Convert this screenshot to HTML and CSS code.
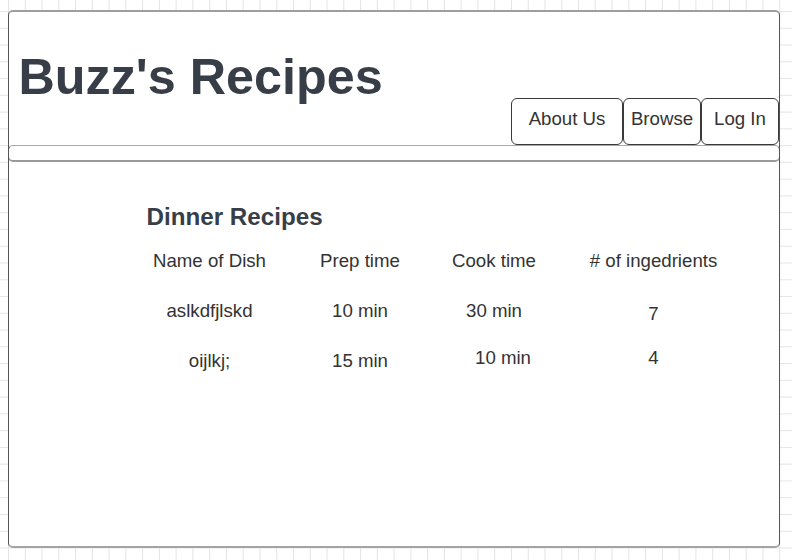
FILE: index.html
```html
<!DOCTYPE html>
<html lang="en">
<head>
<meta charset="utf-8">
<title>Buzz's Recipes</title>
<link rel="stylesheet" href="styles.css">
</head>
<body>
<div class="frame">
  <header class="header">
    <h1 class="title">Buzz's Recipes</h1>
    <nav class="nav">
      <a class="btn btn-wide">About Us</a>
      <a class="btn">Browse</a>
      <a class="btn">Log In</a>
    </nav>
  </header>
  <div class="bar"></div>
  <main class="main">
    <h2 class="heading">Dinner Recipes</h2>
    <div class="table">
      <div class="cell">Name of Dish</div>
      <div class="cell">Prep time</div>
      <div class="cell">Cook time</div>
      <div class="cell"># of ingedrients</div>

      <div class="cell">aslkdfjlskd</div>
      <div class="cell">10 min</div>
      <div class="cell">30 min</div>
      <div class="cell nudge-down">7</div>

      <div class="cell">oijlkj;</div>
      <div class="cell">15 min</div>
      <div class="cell nudge-up nudge-right">10 min</div>
      <div class="cell nudge-up">4</div>
    </div>
  </main>
</div>
</body>
</html>
```

FILE: styles.css
```css
html, body {
  height: 100%;
}
body {
  margin: 0;
  font-family: "Liberation Sans", Arial, sans-serif;
  background-color: #ffffff;
  background-image:
    linear-gradient(to right, #e4e4e4 1px, transparent 1px),
    linear-gradient(to bottom, #e4e4e4 1px, transparent 1px);
  background-size: 16.78px 16.78px;
  background-position: 8px 11px;
  overflow: hidden;
}
.frame {
  box-sizing: border-box;
  width: 772px;
  height: 538px;
  margin: 10px 0 0 8px;
  background: #ffffff;
  border-left: 1px solid #555555;
  border-right: 1px solid #555555;
  border-top: 2px solid #9e9e9e;
  border-bottom: 2px solid #a4a4a4;
  border-radius: 5px;
}
.header {
  display: flex;
  justify-content: space-between;
  align-items: flex-start;
  height: 133px;
}
.title {
  margin: 36px 0 0 9.5px;
  font-size: 50.3px;
  line-height: 58px;
  font-weight: bold;
  color: #383e47;
}
.nav {
  display: flex;
  align-self: flex-end;
}
.btn {
  box-sizing: border-box;
  width: 78px;
  height: 47px;
  padding-top: 8.5px;
  border: 1px solid #3a3a3a;
  border-radius: 6px;
  background: #ffffff;
  font-size: 18.67px;
  line-height: 22px;
  color: #333333;
  text-align: center;
}
.btn-wide {
  width: 112px;
}
.bar {
  box-sizing: border-box;
  height: 17px;
  margin: 0 -1px;
  border: 1px solid #555555;
  border-top-color: #a8a8a8;
  border-bottom: 2px solid #9a9a9a;
  border-radius: 5px;
}
.main {
  padding: 41.4px 0 0 125px;
}
.heading {
  margin: 0 0 0 12.5px;
  font-size: 24.2px;
  line-height: 28px;
  font-weight: bold;
  color: #383e47;
}
.table {
  display: grid;
  grid-template-columns: 151px 150px 118px 201px;
  grid-auto-rows: 49.7px;
  margin-top: 19.1px;
  font-size: 18.67px;
  line-height: 22px;
  color: #333333;
}
.cell {
  text-align: center;
}
.nudge-down {
  margin-top: 3px;
}
.nudge-up {
  margin-top: -2.5px;
}
.nudge-right {
  padding-left: 18px;
}
```
